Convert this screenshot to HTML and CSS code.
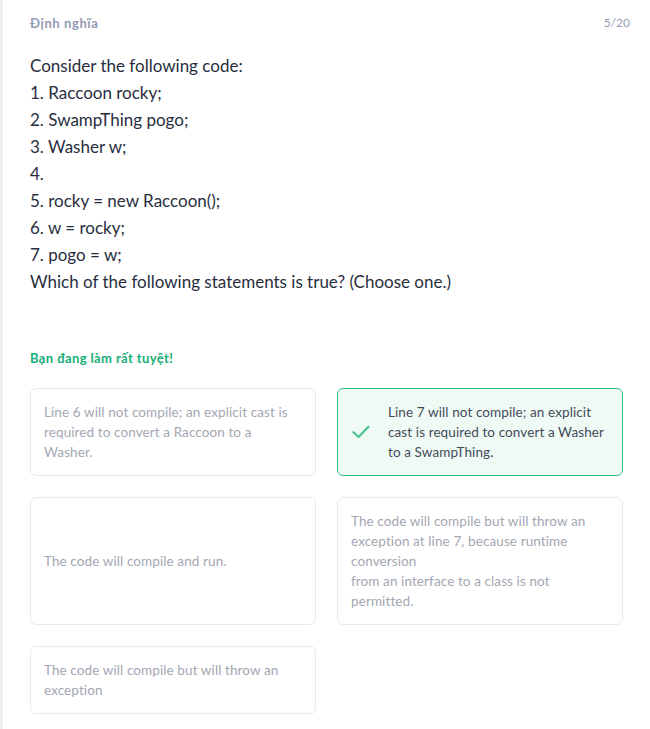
FILE: index.html
```html
<!DOCTYPE html>
<html lang="vi">
<head>
<meta charset="utf-8">
<link rel="stylesheet" href="styles.css">
</head>
<body>
<div class="page">
  <div class="content">
    <div class="header">
      <span class="label">Định nghĩa</span>
      <span class="count">5/20</span>
    </div>
    <div class="question">
      <div>Consider the following code:</div>
      <div>1. Raccoon rocky;</div>
      <div>2. SwampThing pogo;</div>
      <div>3. Washer w;</div>
      <div>4.</div>
      <div>5. rocky = new Raccoon();</div>
      <div>6. w = rocky;</div>
      <div>7. pogo = w;</div>
      <div>Which of the following statements is true? (Choose one.)</div>
    </div>
    <div class="feedback">Bạn đang làm rất tuyệt!</div>
    <div class="options">
      <div class="option">Line 6 will not compile; an explicit cast is required to convert a Raccoon to a Washer.</div>
      <div class="option correct">
        <svg class="check" width="18" height="14" viewBox="0 0 18 14"><path d="M1.5 7.2 L6.5 12 L16.5 1.8" fill="none" stroke="#4cc38f" stroke-width="2.2" stroke-linecap="round" stroke-linejoin="round"/></svg>
        <span>Line 7 will not compile; an explicit cast is required to convert a Washer to a SwampThing.</span>
      </div>
      <div class="option">The code will compile and run.</div>
      <div class="option">The code will compile but will throw an exception at line 7, because runtime conversion<br>from an interface to a class is not permitted.</div>
      <div class="option">The code will compile but will throw an exception</div>
    </div>
  </div>
</div>
</body>
</html>
```

FILE: styles.css
```css
html, body {
  margin: 0;
  padding: 0;
  background: #ffffff;
}
.page {
  border-left: 3px solid #eef0f5;
  min-height: 729px;
  box-sizing: border-box;
  font-family: Lato, "Noto Sans", sans-serif;
}
.content {
  padding: 15px 27px 0 27px;
}
.header {
  display: flex;
  justify-content: space-between;
  align-items: center;
  font-size: 12px;
  line-height: 16px;
  color: #939bb4;
}
.label {
  font-weight: 700;
  font-size: 13px;
  letter-spacing: 0.6px;
}
.count {
  font-weight: 400;
  margin-right: -7px;
}
.question {
  margin-top: 21px;
  font-size: 17px;
  line-height: 27px;
  color: #282e3e;
}
.feedback {
  margin-top: 55px;
  font-size: 13px;
  font-weight: 700;
  letter-spacing: 0.4px;
  line-height: 16px;
  color: #18ae79;
}
.options {
  margin-top: 22px;
  display: grid;
  grid-template-columns: 286px 286px;
  column-gap: 21px;
  row-gap: 21px;
}
.option {
  border: 1px solid #e8eaf0;
  border-radius: 6px;
  padding: 13px 13px;
  font-size: 13.5px;
  letter-spacing: 0.1px;
  line-height: 20px;
  color: #a3a7b2;
  display: flex;
  align-items: center;
  box-sizing: border-box;
}
.option.correct {
  background: #f0faf5;
  border-color: #2cbb7a;
  color: #434a5c;
  padding-left: 14px;
}
.check {
  flex: none;
  margin-right: 18px;
}
```
